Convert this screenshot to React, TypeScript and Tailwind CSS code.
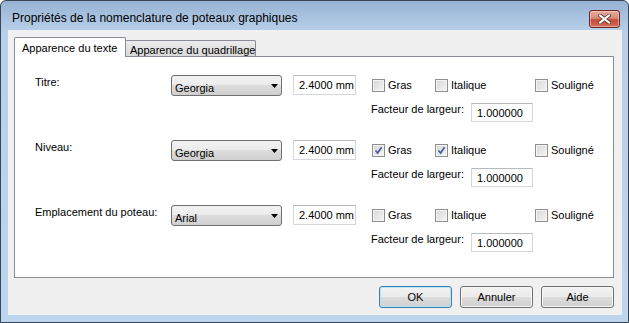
import React from "react"

type Row = { label: string; font: string; bold: boolean; italic: boolean }

const rows: Row[] = [
  { label: "Titre:", font: "Georgia", bold: false, italic: false },
  { label: "Niveau:", font: "Georgia", bold: true, italic: true },
  { label: "Emplacement du poteau:", font: "Arial", bold: false, italic: false },
]

function CheckBox({ checked, label }: { checked: boolean; label: string }) {
  return (
    <div className="flex items-center">
      <div className="relative w-[13px] h-[13px] border border-[#8f8f8f] bg-[linear-gradient(135deg,#d6d6d6,#f6f6f6)] shadow-[inset_0_0_0_1px_#f4f4f4]">
        {checked && (
          <svg className="absolute left-[1px] top-[1px]" width="9" height="9" viewBox="0 0 9 9">
            <path d="M1.5 4.5 L3.6 7 L7.6 1.2" fill="none" stroke="#4a5f95" strokeWidth="1.7" />
          </svg>
        )}
      </div>
      <span className="ml-[3px] leading-[14px]">{label}</span>
    </div>
  )
}

function Combo({ value }: { value: string }) {
  return (
    <div className="w-[111px] h-[21px] flex items-start justify-between border border-[#707070] rounded-[3px] bg-[linear-gradient(to_bottom,#f2f2f2_0%,#ebebeb_50%,#dddddd_50%,#cfcfcf_100%)] pl-[3px] pr-[3px]">
      <span className="pt-[5px] leading-[14px]">{value}</span>
      <svg className="mt-[8px]" width="7" height="4" viewBox="0 0 7 4">
        <path d="M0 0 H7 L3.5 4 Z" fill="#000" />
      </svg>
    </div>
  )
}

function TextBox({ value, w, h }: { value: string; w: string; h: string }) {
  return (
    <div className={`${w} ${h} flex items-center bg-white border border-[#d3d7dd] border-t-[#b7bac1] pl-[5px] leading-[14px]`}>
      {value}
    </div>
  )
}

function PushButton({ label, primary }: { label: string; primary?: boolean }) {
  return (
    <div
      className={
        primary
          ? "w-[73px] h-[22px] flex items-center justify-center rounded-[3px] border border-[#3c7fb1] shadow-[inset_0_0_0_1px_#b8e4f8] bg-[linear-gradient(to_bottom,#f2f2f2_0%,#ebebeb_50%,#dddddd_50%,#cfcfcf_100%)]"
          : "w-[73px] h-[22px] flex items-center justify-center rounded-[3px] border border-[#707070] shadow-[inset_0_0_0_1px_#f8f8f8] bg-[linear-gradient(to_bottom,#f2f2f2_0%,#ebebeb_50%,#dddddd_50%,#cfcfcf_100%)]"
      }
    >
      {label}
    </div>
  )
}

export default function App() {
  return (
    <div className="w-[629px] h-[323px] flex flex-col border border-[#3a4656] rounded-t-[6px] bg-[linear-gradient(to_bottom,#97b3d4_0px,#b7cfe9_30px,#bdd5ed_100%)] font-['Liberation_Sans',Arial,sans-serif] text-[11px] text-black overflow-hidden">
      {/* Title bar */}
      <div className="h-[29px] flex items-start shrink-0">
        <div className="pl-[11px] pt-[10px] text-[12px] leading-[15px] text-[#000] whitespace-nowrap">
          Propriétés de la nomenclature de poteaux graphiques
        </div>
        <div className="ml-auto mt-[9px] mr-[8px] w-[31px] h-[18px] rounded-[3px] border border-[#6a2a22] flex items-center justify-center bg-[linear-gradient(to_bottom,#e9ab9b_0%,#d98c7a_45%,#c44a36_55%,#d2705a_100%)] shadow-[inset_0_0_0_1px_rgba(255,220,210,0.5)]">
          <svg width="13" height="10" viewBox="0 0 13 10">
            <path d="M2 1.5 L11 8.5 M11 1.5 L2 8.5" stroke="#5b3a36" strokeWidth="3.6" strokeLinecap="square" />
            <path d="M2 1.5 L11 8.5 M11 1.5 L2 8.5" stroke="#ffffff" strokeWidth="2" strokeLinecap="square" />
          </svg>
        </div>
      </div>

      {/* Client area */}
      <div className="flex-1 flex flex-col pl-[7px] pr-[6px] pb-[7px]">
        <div className="flex-1 flex flex-col bg-[#f0f0f0] pt-[7px]">
          {/* Tabs */}
          <div className="h-[19px] flex items-end pl-[6px]">
            <div className="relative z-10 -mb-px h-[20px] w-[112px] bg-white border border-b-0 border-[#898c95] rounded-t-[2px] pl-[7px] pt-[4px] leading-[13px] whitespace-nowrap">
              Apparence du texte
            </div>
            <div className="-ml-px h-[16px] w-[131px] border border-b-0 border-[#898c95] rounded-t-[2px] bg-[linear-gradient(to_bottom,#ececec,#d9d9d9)] pl-[4px] pt-[3px] leading-[13px] whitespace-nowrap">
              Apparence du quadrillage
            </div>
          </div>

          {/* Panel */}
          <div className="ml-[6px] mr-[8px] h-[222px] bg-white border border-[#898c95] pl-[20px] pt-[18px] flex flex-col gap-[18px]">
            {rows.map((r) => (
              <div key={r.label} className="flex items-start">
                <div className="w-[136px] leading-[14px]">{r.label}</div>
                <Combo value={r.font} />
                <div className="ml-[11px]">
                  <TextBox value="2.4000 mm" w="w-[63px]" h="h-[20px]" />
                </div>
                <div className="ml-[15px] flex flex-col">
                  <div className="h-[20px] flex items-center pl-[1px]">
                    <div className="w-[63px]">
                      <CheckBox checked={r.bold} label="Gras" />
                    </div>
                    <div className="w-[100px]">
                      <CheckBox checked={r.italic} label="Italique" />
                    </div>
                    <CheckBox checked={false} label="Souligné" />
                  </div>
                  <div className="mt-[8px] flex items-start">
                    <div className="w-[100px] leading-[14px] -mt-[1px]">Facteur de largeur:</div>
                    <TextBox value="1.000000" w="w-[62px]" h="h-[19px]" />
                  </div>
                </div>
              </div>
            ))}
          </div>

          {/* Buttons */}
          <div className="mt-[8px] pr-[8px] flex justify-end gap-[8px]">
            <PushButton label="OK" primary />
            <PushButton label="Annuler" />
            <PushButton label="Aide" />
          </div>
        </div>
      </div>
    </div>
  )
}
